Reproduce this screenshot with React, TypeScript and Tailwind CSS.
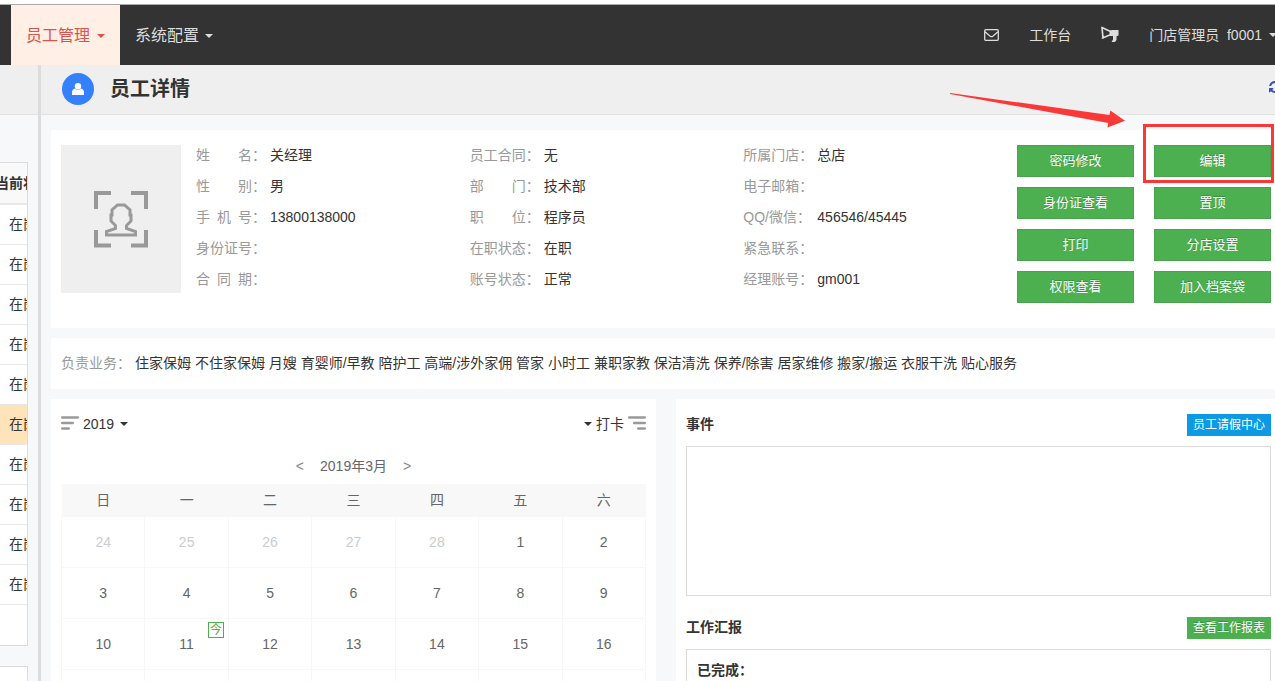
import React from "react";

const FONT = "font-['Liberation_Sans','Noto_Sans_CJK_SC',sans-serif]";

const fields: [string, string][][] = [
  [
    ["姓\u2003\u2003名", "关经理"],
    ["性\u2003\u2003别", "男"],
    ["手\u2002机\u2002号", "13800138000"],
    ["身份证号", ""],
    ["合\u2002同\u2002期", ""],
  ],
  [
    ["员工合同", "无"],
    ["部\u2003\u2003门", "技术部"],
    ["职\u2003\u2003位", "程序员"],
    ["在职状态", "在职"],
    ["账号状态", "正常"],
  ],
  [
    ["所属门店", "总店"],
    ["电子邮箱", ""],
    ["QQ/微信", "456546/45445"],
    ["紧急联系", ""],
    ["经理账号", "gm001"],
  ],
];

const actions = ["密码修改", "编辑", "身份证查看", "置顶", "打印", "分店设置", "权限查看", "加入档案袋"];

const services =
  "住家保姆 不住家保姆 月嫂 育婴师/早教 陪护工 高端/涉外家佣 管家 小时工 兼职家教 保洁清洗 保养/除害 居家维修 搬家/搬运 衣服干洗 贴心服务";

const weekdays = ["日", "一", "二", "三", "四", "五", "六"];

const weeks = [
  [24, 25, 26, 27, 28, 1, 2],
  [3, 4, 5, 6, 7, 8, 9],
  [10, 11, 12, 13, 14, 15, 16],
  [17, 18, 19, 20, 21, 22, 23],
  [24, 25, 26, 27, 28, 29, 30],
];

const staffRows = [0, 1, 2, 3, 4, 5, 6, 7, 8, 9];

function Caret() {
  return (
    <svg className="h-1 w-2 shrink-0" viewBox="0 0 8 4" fill="currentColor" aria-hidden="true">
      <path d="M0 0h8L4 4z" />
    </svg>
  );
}

function Bars({ flip = false }: { flip?: boolean }) {
  return (
    <svg className="mb-0.5 h-3.5 w-[18px] text-[#999]" viewBox="0 0 18 14" stroke="currentColor" strokeWidth="2.6" strokeLinecap="round" aria-hidden="true">
      <path d={flip ? "M1.3 1.5h15.4M6.3 7h10.4M10.300 12.500h6.400" : "M1.3 1.5h15.4M1.3 7h10.4M1.3 12.500h6.400"} />
    </svg>
  );
}

function TopBar() {
  return (
    <header className="mt-1 flex h-[61px] shrink-0 items-stretch justify-between border-t border-[#aaa] bg-[#333] text-[#ddd]">
      <nav className="flex pl-[11px] text-base">
        <button className="flex items-center gap-[7px] bg-[#ffefe4] px-[15px] pt-0.5 text-[#d9534f]">
          员工管理 <Caret />
        </button>
        <button className="flex items-center gap-[6px] px-[15px] pt-0.5">
          系统配置 <Caret />
        </button>
      </nav>
      <div className="-mr-0.5 flex items-center text-sm">
        <button aria-label="消息" className="mr-[30px]">
          <svg className="h-3 w-[15px]" viewBox="0 0 15 12" fill="none" stroke="currentColor" strokeWidth="1.3" aria-hidden="true">
            <rect x="0.7" y="0.7" width="13.6" height="10.6" rx="1" />
            <path d="M1 2.8l5.2 4.4q1.3 1 2.6 0L14 2.8" />
          </svg>
        </button>
        <a href="#workbench" className="mr-[29px]">工作台</a>
        <button aria-label="公告" className="mr-[29px]">
          <svg className="h-[18px] w-5" viewBox="0 0 20 18" aria-hidden="true">
            <path d="M2 1.500L11 5.800M2 1.500l1 10.500M2.500 12L11 8.500" fill="none" stroke="currentColor" strokeWidth="1.7" strokeLinecap="round" />
            <path d="M9.500 4.800L12 4h6.500v5.500l-2 .7V14l-1.500 2h-3.500l1.500-2.500V10H9.500z" fill="currentColor" />
          </svg>
        </button>
        <button className="flex items-center gap-[7px]">
          <span>门店管理员&nbsp; f0001</span> <Caret />
        </button>
      </div>
    </header>
  );
}

function Sidebar() {
  return (
    <aside className="w-[38px] shrink-0 overflow-hidden">
      <div className="h-[50px] border-b border-[#e1e1e1] bg-[#efefef]" />
      <div className="mt-[47px] w-7 overflow-hidden border border-l-0 border-[#dcdcdf] bg-white">
        <table className="-ml-[13px] w-[72px] table-fixed border-collapse text-center text-sm">
          <thead>
            <tr className="h-[41px] border-b-2 border-[#e8e8e8] bg-[#f9f9f9]">
              <th className="p-0 font-bold whitespace-nowrap">当前状态</th>
            </tr>
          </thead>
          <tbody>
            {staffRows.map((i) => (
              <tr key={i} className={i === 5 ? "h-10 border-b border-[#e8e8e8] bg-[#fee4b8]" : "h-10 border-b border-[#e8e8e8]"}>
                <td className="p-0">在岗</td>
              </tr>
            ))}
            <tr className="h-[41px]">
              <td className="p-0" />
            </tr>
          </tbody>
        </table>
      </div>
      <div className="mt-5 h-10 w-7 border border-l-0 border-[#dcdcdf] bg-white" />
    </aside>
  );
}

function Profile() {
  return (
    <section className="flex bg-white px-2.5 pt-[15px] pb-[25px]">
      <div className="flex h-[148px] w-[120px] shrink-0 items-center justify-center bg-[#efefef]">
        <svg className="h-[58px] w-[54px] text-[#999]" viewBox="0 0 54 58" fill="none" stroke="currentColor" aria-hidden="true">
          <path d="M2 19V3h15M37 3h15v16M52 40v15.500H37M17 55.500H2V40" strokeWidth="4" />
          <path
            d="M23.500 15h7l5.500 5v5h1v6l-4.500 4.500V38.500l9 3V45h-29v-3.500l9-3V35.500L17 31v-6h1v-5z"
            strokeWidth="3"
          />
        </svg>
      </div>
      <div className="-mt-1.5 ml-[15px] grid flex-1 grid-cols-3 text-sm">
        {fields.map((column, c) => (
          <dl key={c}>
            {column.map(([label, value]) => (
              <div key={label} className="flex h-[31px] items-center">
                <dt className="w-[74px] shrink-0 whitespace-nowrap text-[#999]">{label}：</dt>
                <dd>{value}</dd>
              </div>
            ))}
          </dl>
        ))}
      </div>
      <div className="grid w-[254px] shrink-0 grid-cols-2 gap-x-5 gap-y-2.5">
        {actions.map((label) => (
          <button key={label} className="h-8 border border-[#48a54d] bg-[#4caf50] text-[13px] leading-5 text-white [text-shadow:0_-1px_0_rgba(0,0,0,0.2)]">
            {label}
          </button>
        ))}
      </div>
    </section>
  );
}

function Calendar() {
  return (
    <section className="bg-white px-2.5 pt-[15px]">
      <div className="flex h-5 items-center justify-between text-sm">
        <button className="flex items-center">
          <Bars />
          <span className="mr-1.5 ml-1">2019</span>
          <Caret />
        </button>
        <button className="flex items-center gap-1">
          <Caret />
          打卡
          <Bars flip />
        </button>
      </div>
      <div className="mt-[22px] flex h-5 items-center justify-center text-sm text-[#666]">
        <button aria-label="上个月" className="text-[#888]">&lt;</button>
        <span className="mx-4">2019年3月</span>
        <button aria-label="下个月" className="text-[#888]">&gt;</button>
      </div>
      <table className="mt-2 w-full table-fixed border-collapse text-center text-sm text-[#666]">
        <thead>
          <tr className="h-8 bg-[#f8f8f8]">
            {weekdays.map((day) => (
              <th key={day} className="p-0 font-normal">{day}</th>
            ))}
          </tr>
        </thead>
        <tbody>
          {weeks.map((week, w) => (
            <tr key={w} className="h-[51px]">
              {week.map((day) => (
                <td key={day} className={w === 0 && day > 20 ? "relative border border-[#f7f7f7] p-0 text-[#ccc]" : "relative border border-[#f7f7f7] p-0"}>
                  {day}
                  {w === 2 && day === 11 && (
                    <span className="absolute top-[3px] right-1 flex size-4 items-center justify-center border border-[#4caf50] text-xs leading-none text-[#4caf50]">今</span>
                  )}
                </td>
              ))}
            </tr>
          ))}
        </tbody>
      </table>
    </section>
  );
}

function Reports() {
  return (
    <section className="bg-white px-2.5 pt-[15px] text-sm">
      <div className="flex h-[22px] items-start justify-between">
        <h2 className="leading-5 font-bold">事件</h2>
        <button className="h-[22px] bg-[#0c9ae5] px-1.5 text-xs leading-5 text-white">员工请假中心</button>
      </div>
      <div className="mt-2.5 h-[150px] border border-[#dcdcdc]" />
      <div className="mt-[21px] flex h-[22px] items-start justify-between">
        <h2 className="leading-5 font-bold">工作汇报</h2>
        <button className="h-[22px] bg-[#4caf50] px-1.5 text-xs leading-5 text-white [text-shadow:0_-1px_0_rgba(0,0,0,0.2)]">查看工作报表</button>
      </div>
      <div className="mt-2.5 h-[150px] border border-[#dcdcdc] px-2.5 py-2.5">
        <h3 className="leading-5 font-bold">已完成：</h3>
      </div>
    </section>
  );
}

export default function App() {
  return (
    <div className={`relative flex h-screen flex-col overflow-hidden bg-white text-[#333] ${FONT}`}>
      <TopBar />
      <div className="flex min-h-0 flex-1 bg-[#f7f8fa]">
        <Sidebar />
        <main className="-mr-1.5 min-w-0 flex-1 border-l-[3px] border-[#dcdcdc]">
          <div className="flex h-[50px] items-center justify-between border-b border-[#e1e1e1] bg-[#efefef] pb-0.5 pl-[21px]">
            <div className="flex items-center gap-4">
              <span className="flex size-8 items-center justify-center rounded-full bg-[#3580fc] text-white">
                <svg className="h-3 w-3" viewBox="0 0 12 12" fill="currentColor" aria-hidden="true">
                  <circle cx="6" cy="3.200" r="3.200" />
                  <path d="M0 12V9q0-2.500 2.800-3.400Q6 8 9.200 5.600 12 6.500 12 9v3z" />
                </svg>
              </span>
              <h1 className="text-xl font-bold">员工详情</h1>
            </div>
            <button aria-label="刷新" className="pb-1 text-[#3a4fb0]">
              <svg className="h-3 w-3" viewBox="0 0 1536 1536" fill="currentColor" aria-hidden="true">
                <path d="M1511 928q0 5-1 7-64 268-268 434.500T764 1536q-146 0-282.500-55T238 1324l-129 129q-19 19-45 19t-45-19-19-45V960q0-26 19-45t45-19h448q26 0 45 19t19 45-19 45l-137 137q71 66 161 102t187 36q134 0 250-65t186-179q11-17 53-117 8-23 30-23h192q13 0 22.500 9.500t9.500 22.500zm25-800v448q0 26-19 45t-45 19h-448q-26 0-45-19t-19-45 19-45l138-138Q969 256 768 256q-134 0-250 65T332 500q-11 17-53 117-8 23-30 23H50q-13 0-22.500-9.500T18 608v-7q65-268 270-434.500T768 0q146 0 284 55.500T1297 212l130-129q19-19 45-19t45 19 19 45z" />
              </svg>
            </button>
          </div>
          <div className="flex flex-col gap-2.5 pt-[15px] pl-2.5">
            <Profile />
            <section className="flex h-[51px] items-center bg-white px-2.5 pb-0.5 text-sm">
              <span className="w-[74px] shrink-0 text-[#999]">负责业务：</span>
              <span>{services}</span>
            </section>
            <div className="grid grid-cols-2 gap-5">
              <Calendar />
              <Reports />
            </div>
          </div>
        </main>
      </div>
      <div className="pointer-events-none absolute top-[124px] right-px h-[59px] w-[131px] border-3 border-[#fb3838]" />
      <svg className="pointer-events-none absolute top-[93px] right-[150px] h-[35px] w-[175px]" viewBox="0 0 175 35" fill="#fb3838" aria-hidden="true">
        <path d="M0 0l159.500 22 .8-4.500L175 27.700 157.500 34.500l.7-4.500L0 1z" />
      </svg>
    </div>
  );
}
